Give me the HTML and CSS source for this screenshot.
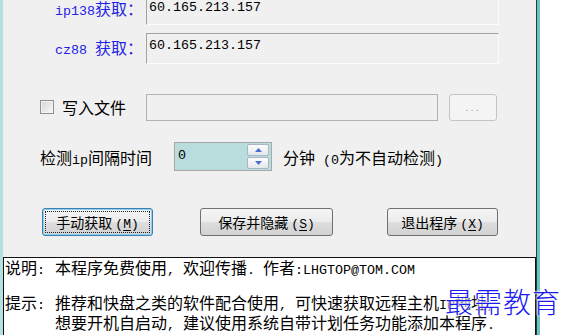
FILE: index.html
```html
<!DOCTYPE html>
<html lang="zh-CN">
<head>
  <meta charset="UTF-8">
  <meta name="viewport" content="width=device-width, initial-scale=1.0">
  <title>IP 获取</title>
  <link rel="stylesheet" href="styles.css">
</head>
<body>
  <div class="page">
    <div class="win">
      <div class="ip-list">
        <div class="ip-row first">
          <span class="ip-label"><span class="m">ip138</span>获取：</span>
          <div class="ip-value">60.165.213.157</div>
        </div>
        <div class="ip-row">
          <span class="ip-label"><span class="m">cz88 </span>获取：</span>
          <div class="ip-value">60.165.213.157</div>
        </div>
      </div>

      <div class="file-row">
        <span class="check"></span>
        <span class="file-label">写入文件</span>
        <div class="file-path"></div>
        <button type="button" class="browse" disabled>...</button>
      </div>

      <div class="interval-row">
        <span class="interval-label">检测<span class="m">ip</span>间隔时间</span>
        <div class="spin">
          <div class="spin-value">0</div>
          <div class="spin-buttons">
            <span class="spin-btn"><svg width="7" height="4" viewBox="0 0 7 4"><path d="M0 4 L3.5 0 L7 4 Z" fill="#4a6fd0"/></svg></span>
            <span class="spin-btn"><svg width="7" height="4" viewBox="0 0 7 4"><path d="M0 0 L7 0 L3.5 4 Z" fill="#4a6fd0"/></svg></span>
          </div>
        </div>
        <span class="interval-note">分钟<span class="m"> (0</span>为不自动检测<span class="m">)</span></span>
      </div>

      <div class="actions">
        <button type="button" class="btn btn-fetch focused">手动获取 <span class="key">(<u>M</u>)</span></button>
        <button type="button" class="btn btn-hide">保存并隐藏 <span class="key">(<u>S</u>)</span></button>
        <button type="button" class="btn btn-exit">退出程序 <span class="key">(<u>X</u>)</span></button>
      </div>

      <div class="info">
        <div class="info-line">
          <span class="info-key">说明<span class="m">:</span></span>
          <span>本程序免费使用<span class="m">, </span>欢迎传播<span class="m">. </span>作者<span class="m">:LHGTOP@TOM.COM</span></span>
        </div>
        <div class="info-line tip">
          <span class="info-key">提示<span class="m">:</span></span>
          <span>推荐和快盘之类的软件配合使用<span class="m">, </span>可快速获取远程主机<span class="m">IP</span>地址<span class="m">,</span><br>想要开机自启动<span class="m">, </span>建议使用系统自带计划任务功能添加本程序<span class="m">.</span></span>
        </div>
      </div>
    </div>
    <div class="edge"></div>
    <div class="outside"></div>

    <div class="watermark">最需教育</div>
  </div>
</body>
</html>
```

FILE: styles.css
```css
body {
  margin: 0;
  background: #fff;
  font-family: "Noto Sans CJK SC", sans-serif;
  font-size: 16px;
  color: #000;
}

.m {
  font-family: "Liberation Mono", monospace;
  font-size: 13.33px;
}

.page {
  position: relative;
  display: flex;
  width: 566px;
  height: 335px;
  overflow: hidden;
}

.win {
  display: flex;
  flex-direction: column;
  width: 533px;
  background: #f0f0f0;
  border-left: 3px solid #b4e0e0;
  border-right: 1px solid #2e3838;
}

.edge {
  width: 3px;
  background: #6ac4c4;
}

.outside {
  flex: 1;
  background: #fff;
}

/* ip 获取结果 */
.ip-row {
  display: flex;
  height: 31px;
}

.ip-row + .ip-row {
  margin-top: 8px;
}

.ip-label {
  width: 140px;
  padding-top: 6px;
  text-align: right;
  color: #2222e6;
  line-height: 16px;
}

.ip-value {
  box-sizing: border-box;
  width: 353px;
  margin-left: 3px;
  padding: 4px 2px;
  border: 1px solid;
  border-color: #a3a3a3 #fcfcfc #fcfcfc #a3a3a3;
  font-family: "Liberation Mono", monospace;
  font-size: 13.33px;
  line-height: 16px;
}

/* 第一行上沿被截掉 */
.first {
  height: 25px;
}

.first .ip-label {
  padding-top: 0;
}

.first .ip-value {
  padding-top: 0;
  border-top: none;
}

/* 写入文件 */
.file-row {
  display: flex;
  align-items: center;
  height: 28px;
  margin-top: 29px;
}

.check {
  box-sizing: border-box;
  width: 14px;
  height: 14px;
  margin-left: 37px;
  border: 1px solid #8e8f8f;
  background: linear-gradient(135deg, #d6d6d6, #f8f8f8);
  box-shadow: inset 0 0 0 1px #f4f4f4;
}

.file-label {
  width: 84px;
  margin-left: 8px;
}

.file-path {
  box-sizing: border-box;
  width: 292px;
  height: 27px;
  align-self: flex-end;
  border: 1px solid #b3b3b3;
  background: #f0f0f0;
}

.browse {
  box-sizing: border-box;
  width: 48px;
  height: 27px;
  margin-left: 11px;
  padding: 0;
  border: 1px solid #c4c4c4;
  border-radius: 3px;
  background: #f4f4f4;
  color: #a8a8a8;
  font-family: "Liberation Sans", sans-serif;
  font-size: 11px;
  letter-spacing: 2px;
}

/* 检测间隔 */
.interval-row {
  display: flex;
  align-items: center;
  height: 29px;
  margin-top: 21px;
}

.interval-label {
  width: 134px;
  padding-left: 37px;
}

.spin {
  box-sizing: border-box;
  display: flex;
  width: 98px;
  height: 29px;
  border: 1px solid #a8a8a8;
  background: #b9dcdc;
}

.spin-value {
  flex: 1;
  padding: 5px 3px;
  line-height: 16px;
  font-family: "Liberation Mono", monospace;
  font-size: 13.33px;
}

.spin-buttons {
  display: flex;
  flex-direction: column;
  gap: 1px;
  width: 22px;
  padding: 1px 2px 1px 0;
}

.spin-btn {
  flex: 1;
  display: flex;
  align-items: center;
  justify-content: center;
  border: 1px solid #a9b5c4;
  border-radius: 2px;
  background: linear-gradient(#fdfdfd, #e4e6ea);
}

.interval-note {
  margin-left: 11px;
}

/* 按钮 */
.actions {
  display: flex;
  height: 28px;
  margin-top: 37px;
}

.btn {
  box-sizing: border-box;
  height: 28px;
  padding: 0;
  border: 1px solid #707070;
  border-radius: 3px;
  background: linear-gradient(#f4f4f4 0%, #ececec 48%, #dddddd 52%, #d2d2d2 100%);
  font-family: "Noto Sans CJK SC", sans-serif;
  font-size: 14px;
  color: #000;
}

.key {
  font-family: "Liberation Mono", monospace;
  font-size: 13px;
}

.btn u {
  text-underline-offset: 2px;
}

.btn-fetch {
  width: 111px;
  margin-left: 39px;
}

.btn-hide {
  width: 133px;
  margin-left: 47px;
}

.btn-exit {
  width: 111px;
  margin-left: 54px;
}

.focused {
  border-color: #3c7fb1;
  box-shadow: inset 0 0 0 1px #8fd0f0;
  outline: 1px dotted #222;
  outline-offset: -4px;
}

/* 说明区域 */
.info {
  flex: 1;
  margin-top: 21px;
  padding: 1px 0 0 1px;
  border: 1px solid #111;
  border-bottom: none;
  background: #fff;
  line-height: 17px;
}

.info-line {
  display: flex;
  white-space: nowrap;
}

.info-key {
  width: 50px;
  flex-shrink: 0;
}

.tip {
  margin-top: 15px;
}

/* 水印 */
.watermark {
  position: absolute;
  left: 445px;
  top: 283px;
  font-family: "Noto Sans CJK SC", serif;
  font-size: 28px;
  font-weight: 300;
  line-height: 36px;
  letter-spacing: 1px;
  color: #1c1cf0;
  text-shadow: 0 0 2px #fff, 0 0 2px #fff, 0 0 3px #fff;
}
```
